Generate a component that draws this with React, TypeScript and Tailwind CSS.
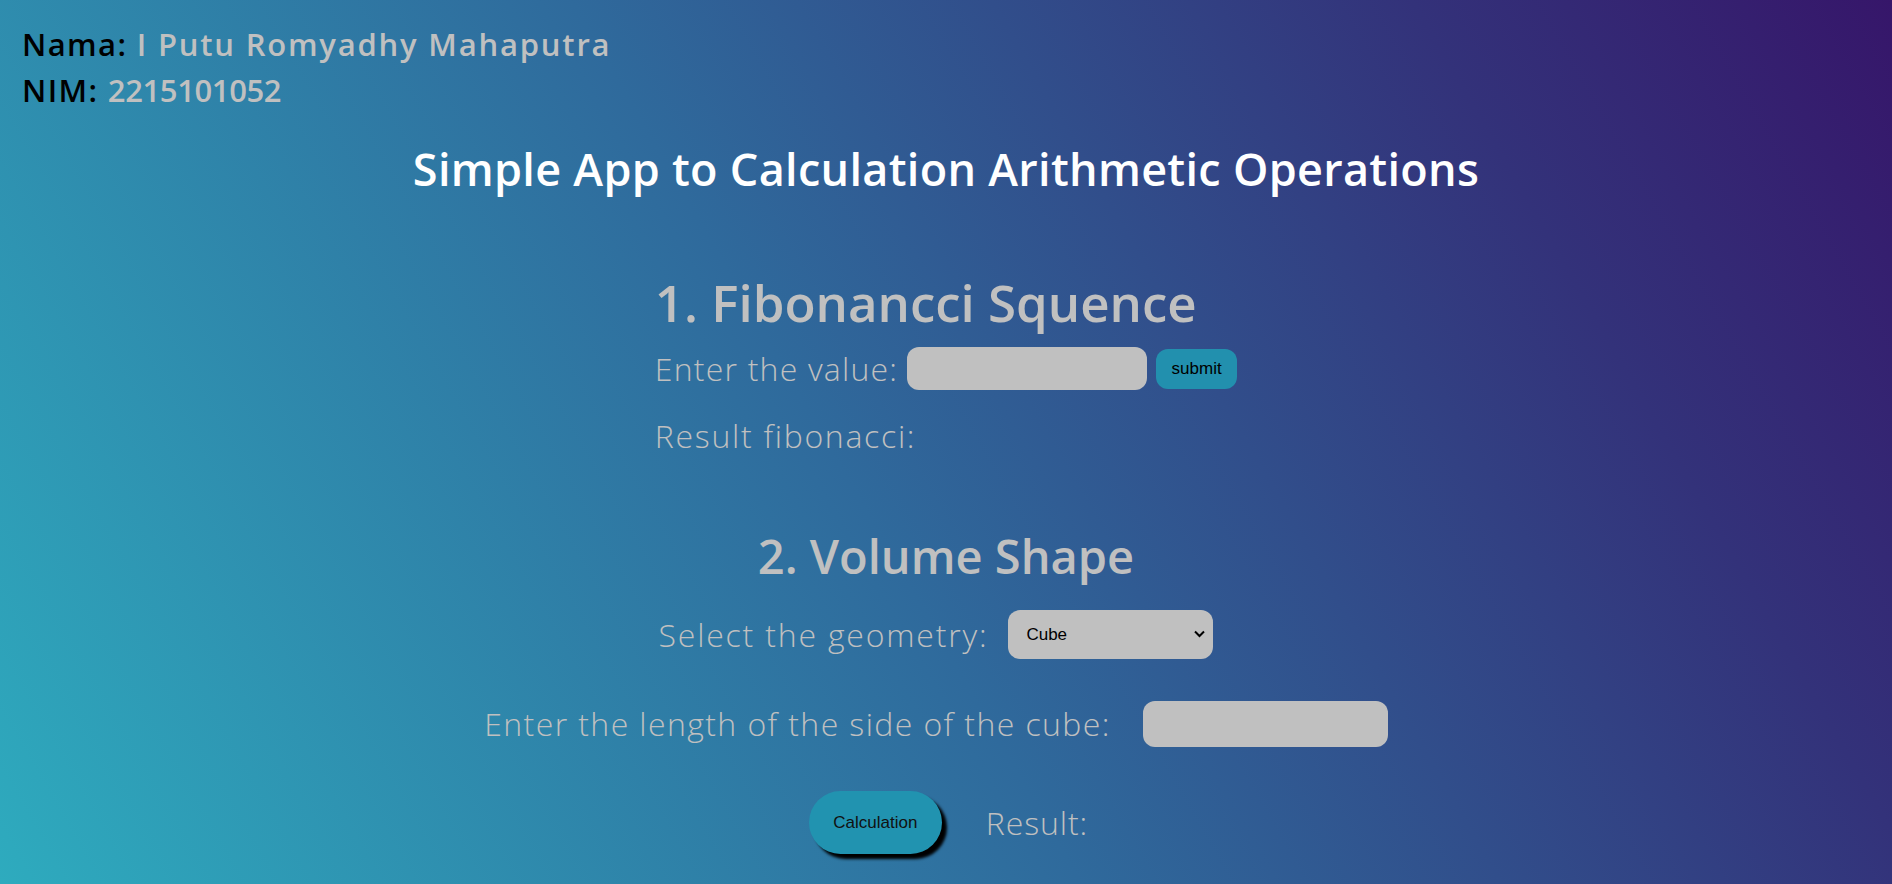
import React, { useState } from 'react';

export default function App() {
  const [fibInput, setFibInput] = useState('');
  const [side, setSide] = useState('');
  const [shape, setShape] = useState('cube');

  return (
    <div className="min-h-screen w-full bg-[linear-gradient(60deg,#2eabbe_0%,#2f6a9c_45%,#33327a_80%,#36166a_100%)] font-['Open_Sans',sans-serif]">
      {/* Identity */}
      <div className="pl-[22px] pt-[21px] text-[31px] font-semibold leading-[46px] tracking-[1.4px]">
        <p>
          <span className="text-black">Nama:</span>{' '}
          <span className="tracking-[1.8px] text-[#c0c0c0]">I Putu Romyadhy Mahaputra</span>
        </p>
        <p>
          <span className="text-black">NIM:</span>{' '}
          <span className="tracking-[-0.4px] text-[#c0c0c0]">2215101052</span>
        </p>
      </div>

      <h1 className="mt-[28px] text-center text-[45px] font-semibold leading-[56px] tracking-[0.3px] text-white">
        Simple App to Calculation Arithmetic Operations
      </h1>

      {/* Fibonacci */}
      <div className="mx-auto w-fit">
        <h2 className="mt-[75px] text-[51px] font-semibold leading-[60px] text-[#c0c0c0]">
          1. Fibonancci Squence
        </h2>
        <div className="mt-[15px] flex items-center">
          <label className="text-[32px] font-light leading-[40px] tracking-[1.2px] text-[#c0c0c0]">Enter the value:</label>
          <input
            type="number"
            value={fibInput}
            onChange={(e) => setFibInput(e.target.value)}
            className="ml-[9px] h-[43px] w-[240px] rounded-[12px] bg-[#c0c0c0] px-3 text-[17px] outline-none"
          />
          <button className="ml-[9px] h-[40px] w-[81px] rounded-[12px] bg-[#2290ae] font-['Liberation_Sans',Arial,sans-serif] text-[17px] text-black">
            submit
          </button>
        </div>
        <p className="mt-[26px] text-[32px] font-light leading-[40px] tracking-[1.7px] text-[#c0c0c0]">Result fibonacci:</p>
      </div>

      {/* Volume */}
      <h2 className="mt-[70px] text-center text-[47px] font-semibold leading-[60px] text-[#c0c0c0]">
        2. Volume Shape
      </h2>
      <div className="mt-[24px] flex items-center justify-center gap-[20px] pr-[20px]">
        <label className="text-[32px] font-light leading-[40px] tracking-[1.8px] text-[#c0c0c0]">Select the geometry:</label>
        <div className="relative">
          <select
            value={shape}
            onChange={(e) => setShape(e.target.value)}
            className="h-[49px] w-[205px] appearance-none rounded-[12px] bg-[#c0c0c0] pl-[18px] font-['Liberation_Sans',Arial,sans-serif] text-[17px] text-black outline-none"
          >
            <option value="cube">Cube</option>
            <option value="sphere">Sphere</option>
            <option value="cylinder">Cylinder</option>
          </select>
          <svg
            className="pointer-events-none absolute right-[8px] top-[20px]"
            width="11"
            height="8"
            viewBox="0 0 11 8"
            fill="none"
            stroke="black"
            strokeWidth="2"
          >
            <path d="M1 1.5l4.5 4.5 4.5-4.5" />
          </svg>
        </div>
      </div>
      <div className="mt-[42px] flex items-center justify-center gap-[32px] pr-[20px]">
        <label className="text-[32px] font-light leading-[40px] tracking-[1.4px] text-[#c0c0c0]">
          Enter the length of the side of the cube:
        </label>
        <input
          type="number"
          value={side}
          onChange={(e) => setSide(e.target.value)}
          className="h-[46px] w-[245px] rounded-[12px] bg-[#c0c0c0] px-3 text-[17px] outline-none"
        />
      </div>
      <div className="mt-[44px] flex items-center justify-center gap-[44px] pb-[30px] pl-[5px]">
        <button className="h-[63px] w-[133px] rounded-full bg-[#2193b0] font-['Liberation_Sans',Arial,sans-serif] text-[17px] text-[#111] shadow-[5px_5px_3px_#000]">
          Calculation
        </button>
        <p className="text-[32px] font-light leading-[40px] tracking-[0.9px] text-[#c0c0c0]">Result:</p>
      </div>
    </div>
  );
}
